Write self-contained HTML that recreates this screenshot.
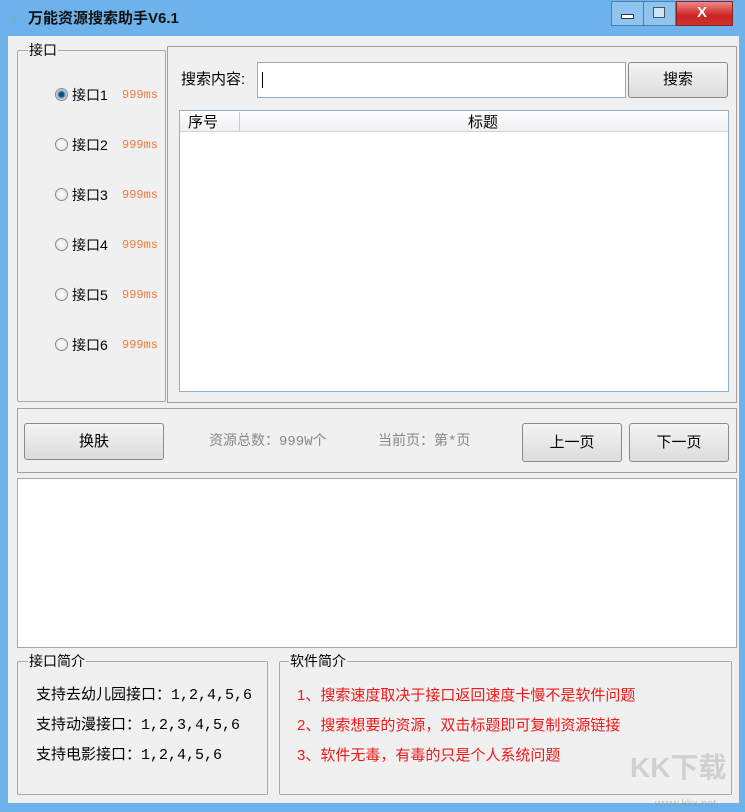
<!DOCTYPE html>
<html><head><meta charset="utf-8"><style>
*{margin:0;padding:0;box-sizing:border-box}
body{width:745px;height:811px;background:#6db2ea;font-family:"Liberation Sans","Noto Sans CJK SC",sans-serif;font-size:14px;color:#000;position:relative;overflow:hidden}
.a{position:absolute}
.client{left:8px;top:36px;width:731px;height:767px;background:#f0f0f0}
.gb{position:absolute;border:1px solid #a8a8a8;border-radius:2px}
.gl{position:absolute;background:#f0f0f0;padding:0 1px;font-size:14px;line-height:16px}
.btn{position:absolute;border:1px solid #8a8a8a;border-radius:3px;background:linear-gradient(#f4f4f4,#dcdcdc);text-align:center;font-size:15px}
.rad{position:absolute;width:13px;height:13px;border-radius:50%;border:1px solid #8a8a8a;background:radial-gradient(#fff,#ddd)}
.ms{position:absolute;color:#f07a3a;font-family:"Liberation Mono",monospace;font-size:12px}
.t{position:absolute;white-space:nowrap;line-height:16px}
.m{font-family:"Liberation Mono","Noto Sans CJK SC",monospace;font-size:14px}
.red{color:#f01818}
</style></head><body>
<div class="a" style="left:0;top:0;width:745px;height:36px;background:#6db2ea"></div>
<div class="t" style="left:10px;top:12px;font-size:9px;color:#8aa">⚲</div>
<div class="t" style="left:28px;top:11px;font-size:15px;font-weight:bold;color:#111">万能资源搜索助手V6.1</div>
<div class="a" style="left:611px;top:1px;width:33px;height:25px;border:1px solid #4a7fae;background:#8ec4ee"></div>
<div class="a" style="left:621px;top:14px;width:13px;height:5px;border:1px solid #235;background:#fff"></div>
<div class="a" style="left:643px;top:1px;width:33px;height:25px;border:1px solid #4a7fae;background:#8ec4ee"></div>
<div class="a" style="left:653px;top:7px;width:12px;height:11px;border:1px solid #456;background:#cfe4f6"></div>
<div class="a" style="left:676px;top:1px;width:57px;height:25px;border:1px solid #8a2020;background:linear-gradient(#e88,#c22 60%,#c33)"></div>
<div class="t" style="left:697px;top:5px;color:#fff;font-weight:bold;font-size:15px">X</div>
<div class="a client"></div>

<div class="gb" style="left:17px;top:50px;width:149px;height:352px"></div>
<div class="gl" style="left:28px;top:42px">接口</div>
<div class="rad" style="left:55px;top:88px;background:radial-gradient(#1a4a70 30%,#6fa9d6 45%,#ddd 70%)"></div>
<div class="t" style="left:72px;top:87px">接口1</div><div class="ms" style="left:122px;top:88px">999ms</div>
<div class="rad" style="left:55px;top:138px"></div><div class="t" style="left:72px;top:137px">接口2</div><div class="ms" style="left:122px;top:138px">999ms</div>
<div class="rad" style="left:55px;top:188px"></div><div class="t" style="left:72px;top:187px">接口3</div><div class="ms" style="left:122px;top:188px">999ms</div>
<div class="rad" style="left:55px;top:238px"></div><div class="t" style="left:72px;top:237px">接口4</div><div class="ms" style="left:122px;top:238px">999ms</div>
<div class="rad" style="left:55px;top:288px"></div><div class="t" style="left:72px;top:287px">接口5</div><div class="ms" style="left:122px;top:288px">999ms</div>
<div class="rad" style="left:55px;top:338px"></div><div class="t" style="left:72px;top:337px">接口6</div><div class="ms" style="left:122px;top:338px">999ms</div>

<div class="a" style="left:167px;top:46px;width:570px;height:357px;border:1px solid #a0a0a0"></div>
<div class="t" style="left:181px;top:72px;font-size:15px">搜索内容:</div>
<div class="a" style="left:257px;top:62px;width:369px;height:36px;background:#fff;border:1px solid #9ab"></div>
<div class="a" style="left:262px;top:72px;width:1px;height:16px;background:#000"></div>
<div class="btn" style="left:628px;top:62px;width:100px;height:36px;line-height:34px">搜索</div>
<div class="a" style="left:179px;top:110px;width:550px;height:282px;background:#fff;border:1px solid #8fb0cc"></div>
<div class="a" style="left:180px;top:111px;width:548px;height:21px;background:linear-gradient(#fff,#eef0f2);border-bottom:1px solid #d5d5d5"></div>
<div class="a" style="left:239px;top:112px;width:1px;height:20px;background:#ccc"></div>
<div class="t" style="left:188px;top:115px;font-size:15px">序号</div>
<div class="t" style="left:468px;top:115px;font-size:15px">标题</div>

<div class="a" style="left:17px;top:408px;width:720px;height:65px;border:1px solid #a0a0a0"></div>
<div class="btn" style="left:24px;top:423px;width:140px;height:37px;line-height:35px">换肤</div>
<div class="t m" style="left:209px;top:434px;color:#888">资源总数：999W个</div>
<div class="t m" style="left:378px;top:434px;color:#888">当前页：第*页</div>
<div class="btn" style="left:522px;top:423px;width:100px;height:39px;line-height:37px">上一页</div>
<div class="btn" style="left:629px;top:423px;width:100px;height:39px;line-height:37px">下一页</div>

<div class="a" style="left:17px;top:478px;width:720px;height:170px;background:#fff;border:1px solid #9ab"></div>

<div class="gb" style="left:17px;top:661px;width:251px;height:134px"></div>
<div class="gl" style="left:28px;top:653px">接口简介</div>
<div class="t m" style="left:36px;top:688px;font-size:15px">支持去幼儿园接口：1,2,4,5,6</div>
<div class="t m" style="left:36px;top:718px;font-size:15px">支持动漫接口：1,2,3,4,5,6</div>
<div class="t m" style="left:36px;top:748px;font-size:15px">支持电影接口：1,2,4,5,6</div>

<div class="gb" style="left:279px;top:661px;width:453px;height:134px"></div>
<div class="gl" style="left:289px;top:653px">软件简介</div>
<div class="t red" style="left:297px;top:688px;font-size:15px">1、搜索速度取决于接口返回速度卡慢不是软件问题</div>
<div class="t red" style="left:297px;top:718px;font-size:15px">2、搜索想要的资源，双击标题即可复制资源链接</div>
<div class="t red" style="left:297px;top:748px;font-size:15px">3、软件无毒，有毒的只是个人系统问题</div>
<div class="t" style="left:630px;top:760px;font-size:28px;font-weight:bold;color:rgba(150,150,150,.35)">KK下载</div>
<div class="t" style="left:655px;top:796px;font-size:11px;color:rgba(150,150,150,.5)">www.kkx.net</div>
</body></html>
